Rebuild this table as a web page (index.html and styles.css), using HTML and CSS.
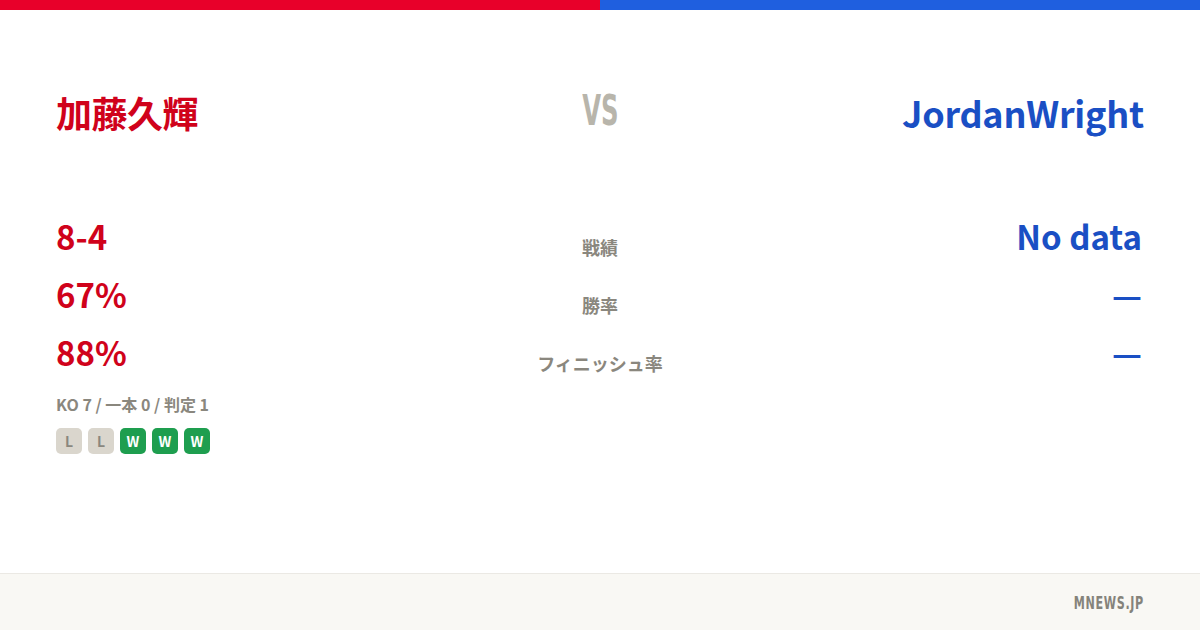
FILE: index.html
```html
<!DOCTYPE html>
<html lang="ja">
<head>
    <meta charset="UTF-8">
    <title>加藤久輝 vs JordanWright</title>
    <link rel="stylesheet" href="styles.css">
</head>
<body>
    <div class="topbar">
        <div class="bar-red"></div>
        <div class="bar-blue"></div>
    </div>

    <main class="card">
        <div class="names">
            <div class="name red">加藤久輝</div>
            <div class="vs"><span>VS</span></div>
            <div class="name blue right">JordanWright</div>
        </div>

        <div class="stats">
            <div class="value red">8-4</div>
            <div class="label">戦績</div>
            <div class="value blue right">No data</div>

            <div class="value red">67%</div>
            <div class="label">勝率</div>
            <div class="value blue right">—</div>

            <div class="value red">88%</div>
            <div class="label">フィニッシュ率</div>
            <div class="value blue right">—</div>
        </div>

        <p class="methods">KO 7 / 一本 0 / 判定 1</p>
        <div class="streak">
            <span class="badge loss">L</span>
            <span class="badge loss">L</span>
            <span class="badge win">W</span>
            <span class="badge win">W</span>
            <span class="badge win">W</span>
        </div>
    </main>

    <footer class="footer">
        <span class="brand">MNEWS.JP</span>
    </footer>
</body>
</html>
```

FILE: styles.css
```css
/* Base */
body {
    margin: 0;
    font-family: "Noto Sans CJK JP", "Noto Sans", sans-serif;
    font-weight: 700;
    background: #ffffff;
    min-height: 100vh;
    display: flex;
    flex-direction: column;
}

/* Red / blue strip */
.topbar {
    display: flex;
    height: 10px;
}

.bar-red,
.bar-blue {
    flex: 1;
}

.bar-red { background: #e8002a; }
.bar-blue { background: #1f5fdf; }

/* Main card */
.card {
    padding: 0 56px;
}

.red { color: #d0021b; }
.blue { color: #1a4fc4; }
.right { text-align: right; }

.names {
    display: grid;
    grid-template-columns: 1fr auto 1fr;
    align-items: center;
    height: 70px;
    margin-top: 67px;
}

.name {
    font-size: 36px;
    letter-spacing: -0.5px;
}

.name.blue {
    letter-spacing: -0.25px;
}

.vs {
    text-align: center;
    margin-top: -4px;
}

.vs span {
    display: inline-block;
    font-family: "DejaVu Sans", sans-serif;
    font-size: 42px;
    color: #b8b5ab;
    transform: scaleX(0.58);
}

/* Stat rows */
.stats {
    display: grid;
    grid-template-columns: 1fr 200px 1fr;
    align-items: end;
    margin-top: 60px;
}

.value {
    font-size: 33px;
    line-height: 58px;
}

.value.right {
    padding-right: 2px;
}

.label {
    text-align: center;
    font-size: 18px;
    line-height: 36px;
    color: #8a877e;
}

.methods {
    margin: 11px 0 0;
    font-size: 16px;
    line-height: 24px;
    color: #8a877e;
}

.streak {
    display: flex;
    gap: 6px;
    margin-top: 12px;
}

.badge {
    width: 26px;
    height: 26px;
    border-radius: 5px;
    display: flex;
    align-items: center;
    justify-content: center;
    font-size: 14px;
}

.badge.loss {
    background: #dad6cd;
    color: #8a877e;
}

.badge.win {
    background: #1e9e4f;
    color: #ffffff;
}

/* Footer */
.footer {
    margin-top: auto;
    height: 56px;
    border-top: 1px solid #ebe9e4;
    background: #f9f8f4;
    display: flex;
    align-items: center;
    justify-content: flex-end;
    padding: 0 56px;
}

.brand {
    display: inline-block;
    font-family: "DejaVu Sans", sans-serif;
    font-size: 18px;
    color: #85837b;
    letter-spacing: 1px;
    transform: scaleX(0.62);
    transform-origin: right center;
}
```
